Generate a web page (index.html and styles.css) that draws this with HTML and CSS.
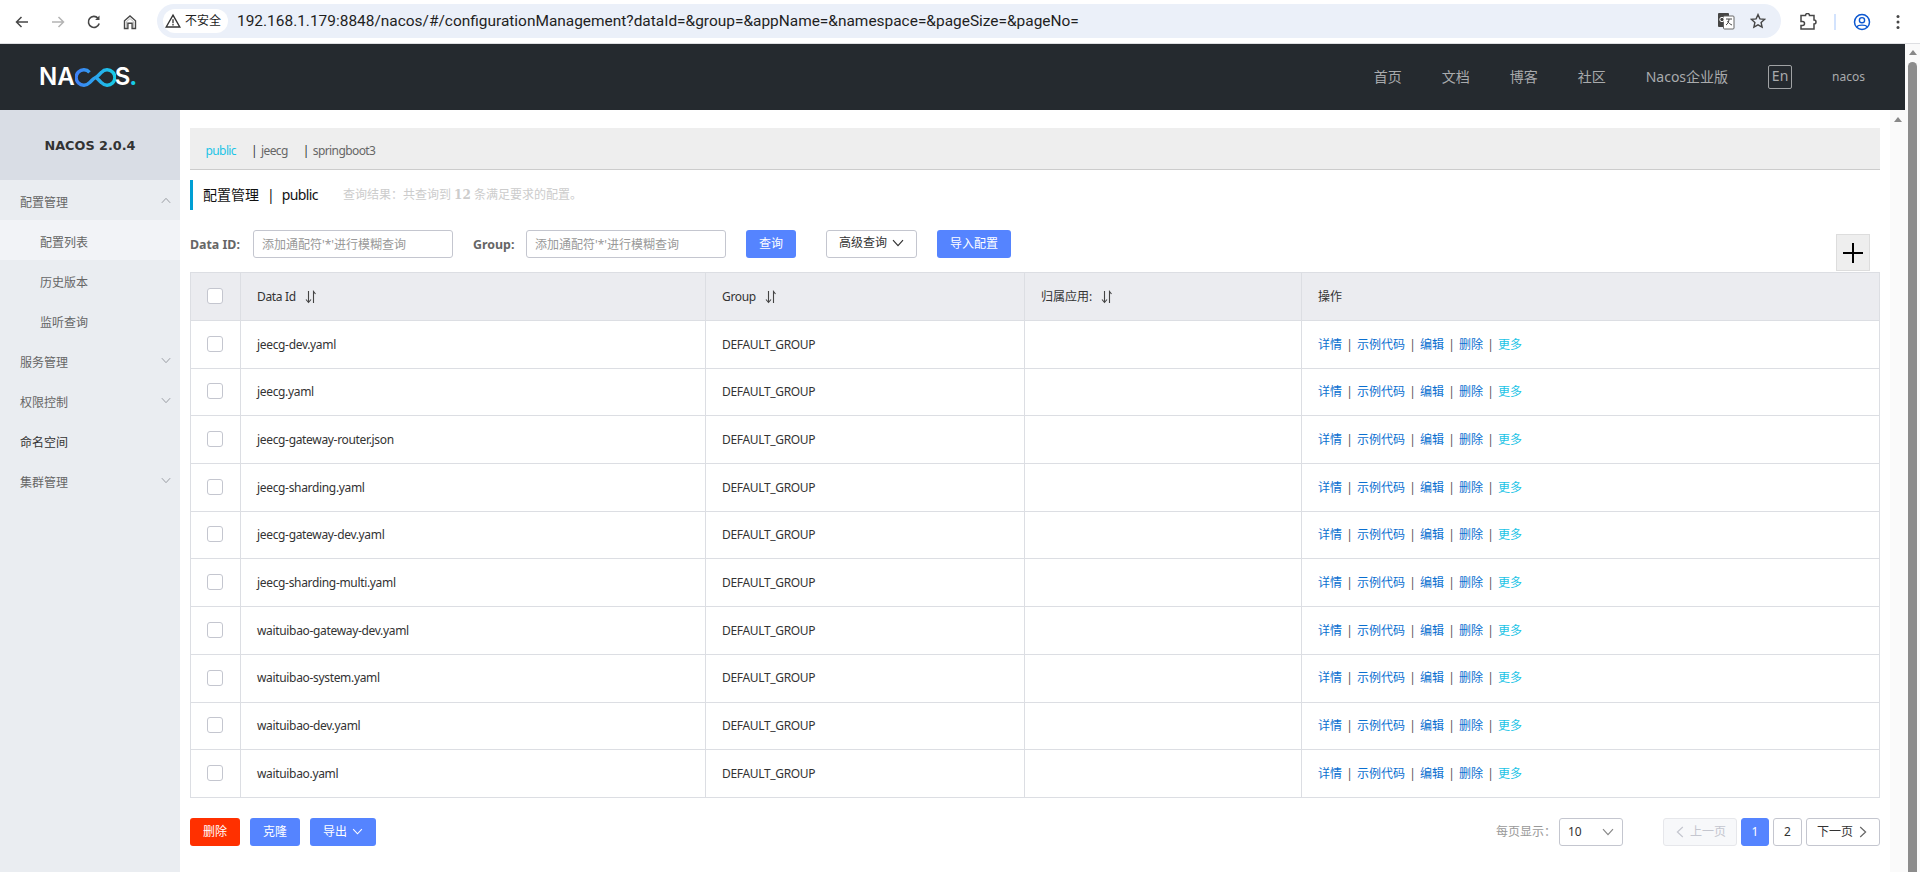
FILE: index.html
```html
<!DOCTYPE html>
<html lang="zh-CN">
<head>
<meta charset="utf-8">
<title>Nacos</title>
<link rel="stylesheet" href="styles.css">
</head>
<body>
<svg class="defs" width="0" height="0" aria-hidden="true">
  <defs>
    <linearGradient id="inf" x1="0" x2="1" y1="0" y2="0"><stop offset="0" stop-color="#3f7ff5"/><stop offset="1" stop-color="#17cbe6"/></linearGradient>
    <symbol id="sort" viewBox="0 0 12 14"><path d="M3.5 1v11M1 9.5 3.5 12.5 6 9.5M8.5 13V1.5L10.5 4" fill="none" stroke="#444" stroke-width="1.1"/></symbol>
    <symbol id="chev" viewBox="0 0 12 8"><path d="M1 1.2 6 6.6l5-5.4" fill="none" stroke="currentColor" stroke-width="1.2"/></symbol>
  </defs>
</svg>
<div class="chrome">
  <div class="tbtn"><svg width="16" height="16" viewBox="0 0 16 16"><path d="M14 8H3M7.5 3 2.5 8l5 5" fill="none" stroke="#474747" stroke-width="1.5"/></svg></div>
  <div class="tbtn"><svg width="16" height="16" viewBox="0 0 16 16"><path d="M2 8h11M8.5 3l5 5-5 5" fill="none" stroke="#b4b4b4" stroke-width="1.5"/></svg></div>
  <div class="tbtn"><svg width="16" height="16" viewBox="0 0 16 16"><path d="M13.2 9.5A5.5 5.5 0 1 1 12 4.2" fill="none" stroke="#474747" stroke-width="1.6"/><path d="M13.5 1.5v4.4H9.1z" fill="#474747"/></svg></div>
  <div class="tbtn"><svg width="16" height="16" viewBox="0 0 16 16"><path d="M2.5 14.5V6.7L8 2l5.5 4.7v7.8h-3.4V9.2H5.9v5.3z" fill="none" stroke="#474747" stroke-width="1.4"/><path d="M4.6 14V7.6L8 4.6l3.4 3v6.4" fill="none" stroke="#9a9a9a" stroke-width=".7"/></svg></div>
  <div class="addr">
    <div class="chip">
      <svg width="16" height="16" viewBox="0 0 16 16"><path d="M8 2.2 14.8 14H1.2z" fill="none" stroke="#333" stroke-width="1.4"/><path d="M8 6.2v4M8 11v1.6" stroke="#333" stroke-width="1.3"/></svg>
      <span>不安全</span>
    </div>
    <span class="url">192.168.1.179:8848/nacos/#/configurationManagement?dataId=&amp;group=&amp;appName=&amp;namespace=&amp;pageSize=&amp;pageNo=</span>
    <div class="addr-icons">
      <div class="aicon"><svg width="18" height="18" viewBox="0 0 18 18"><rect x="1" y="1" width="11" height="14" rx="1" fill="#454545"/><rect x="6.5" y="4" width="10.5" height="13" rx="1" fill="#fff" stroke="#666"/><circle cx="5" cy="7.5" r="2.2" fill="none" stroke="#fff" stroke-width="1"/><path d="M9 7h6M12 7c0 3-1.5 5-3 6M10.5 9c1 2 3 3.5 4.5 4" fill="none" stroke="#454545" stroke-width="1"/></svg></div>
      <div class="aicon"><svg width="16" height="16" viewBox="0 0 16 16"><path d="M8 1.6l1.9 4.3 4.6.5-3.4 3.1 1 4.6L8 11.8l-4.1 2.3 1-4.6L1.500 6.400l4.600-.5z" fill="none" stroke="#474747" stroke-width="1.4"/></svg></div>
    </div>
  </div>
  <div class="tbtn ext"><svg width="18" height="18" viewBox="0 0 18 18"><path d="M2 2.500h4.500a2 2 0 0 1 4 0H15v4.500a2 2 0 0 1 0 4V16H2v-3.500h1.500a2 2 0 0 0 0-4H2z" fill="none" stroke="#474747" stroke-width="1.5"/></svg></div>
  <div class="tdiv"></div>
  <div class="tbtn prof"><svg width="18" height="18" viewBox="0 0 18 18"><circle cx="9" cy="9" r="7.500" fill="none" stroke="#0b57d0" stroke-width="1.500"/><circle cx="9" cy="7.200" r="2.600" fill="none" stroke="#0b57d0" stroke-width="1.400"/><path d="M4 14c1-2.500 9-2.500 10 0" fill="none" stroke="#0b57d0" stroke-width="1.400"/></svg></div>
  <div class="tbtn"><svg width="16" height="16" viewBox="0 0 16 16"><circle cx="8" cy="2.500" r="1.500" fill="#474747"/><circle cx="8" cy="8" r="1.500" fill="#474747"/><circle cx="8" cy="13.500" r="1.500" fill="#474747"/></svg></div>
</div>
<div class="viewport">
  <div class="app">
    <header class="head">
      <div class="logo"><span>NA</span><svg class="logo-inf" width="41" height="19" viewBox="0 0 41 19"><path d="M14.500 4.300A7.700 7.700 0 1 0 14.500 14.700C17 12.500 18 10.500 20.500 9.500S24 6.500 26.500 4.300A7.700 7.700 0 1 1 26.500 14.700C24 12.500 23 10.500 20.500 9.500" fill="none" stroke="url(#inf)" stroke-width="3.400"/></svg><span>S</span><span class="logo-dot">.</span></div>
      <nav class="nav">
        <a>首页</a><a>文档</a><a>博客</a><a>社区</a><a>Nacos企业版</a><span class="lang">En</span><span class="user">nacos</span>
      </nav>
    </header>
    <div class="below">
      <aside class="side">
        <div class="side-head">NACOS 2.0.4</div>
        <div class="mi"><span>配置管理</span><svg class="up" width="10" height="7"><use href="#chev"/></svg></div>
        <div class="mi sub on"><span>配置列表</span></div>
        <div class="mi sub"><span>历史版本</span></div>
        <div class="mi sub"><span>监听查询</span></div>
        <div class="mi"><span>服务管理</span><svg width="10" height="7"><use href="#chev"/></svg></div>
        <div class="mi"><span>权限控制</span><svg width="10" height="7"><use href="#chev"/></svg></div>
        <div class="mi dark"><span>命名空间</span></div>
        <div class="mi"><span>集群管理</span><svg width="10" height="7"><use href="#chev"/></svg></div>
      </aside>
      <main class="main">
        <div class="ns">
          <a class="ns-on">public</a><i>|</i><a>jeecg</a><i>|</i><a>springboot3</a>
        </div>
        <div class="title">
          <span class="title-main">配置管理</span><span class="title-sep">|</span><span class="title-main title-lat">public</span>
          <span class="hint">查询结果：共查询到 <b>12</b> 条满足要求的配置。</span>
        </div>
        <div class="filter">
          <label class="lab lab-id">Data ID:</label>
          <input class="inp" placeholder="添加通配符'*'进行模糊查询">
          <label class="lab lab-group">Group:</label>
          <input class="inp" placeholder="添加通配符'*'进行模糊查询">
          <button class="btn pri btn-q">查询</button>
          <button class="btn def btn-adv">高级查询<svg width="12" height="8"><use href="#chev"/></svg></button>
          <button class="btn pri btn-imp">导入配置</button>
        </div>
        <div class="plus"><svg width="20" height="20" viewBox="0 0 20 20"><path d="M10 0v20M0 10h20" stroke="#000" stroke-width="2"/></svg></div>
        <table class="tb">
          <colgroup><col class="c1"><col class="c2"><col class="c3"><col class="c4"><col></colgroup>
          <thead>
            <tr>
              <th><span class="cb"></span></th>
              <th><span class="th-in">Data Id<svg width="12" height="14"><use href="#sort"/></svg></span></th>
              <th><span class="th-in">Group<svg width="12" height="14"><use href="#sort"/></svg></span></th>
              <th><span class="th-in th-cn">归属应用:<svg width="12" height="14"><use href="#sort"/></svg></span></th>
              <th>操作</th>
            </tr>
          </thead>
          <tbody>
            <tr><td><span class="cb"></span></td><td>jeecg-dev.yaml</td><td>DEFAULT_GROUP</td><td></td><td class="ops"><a>详情</a><i>|</i><a>示例代码</a><i>|</i><a>编辑</a><i>|</i><a>删除</a><i>|</i><a class="more">更多</a></td></tr>
            <tr><td><span class="cb"></span></td><td>jeecg.yaml</td><td>DEFAULT_GROUP</td><td></td><td class="ops"><a>详情</a><i>|</i><a>示例代码</a><i>|</i><a>编辑</a><i>|</i><a>删除</a><i>|</i><a class="more">更多</a></td></tr>
            <tr><td><span class="cb"></span></td><td>jeecg-gateway-router.json</td><td>DEFAULT_GROUP</td><td></td><td class="ops"><a>详情</a><i>|</i><a>示例代码</a><i>|</i><a>编辑</a><i>|</i><a>删除</a><i>|</i><a class="more">更多</a></td></tr>
            <tr><td><span class="cb"></span></td><td>jeecg-sharding.yaml</td><td>DEFAULT_GROUP</td><td></td><td class="ops"><a>详情</a><i>|</i><a>示例代码</a><i>|</i><a>编辑</a><i>|</i><a>删除</a><i>|</i><a class="more">更多</a></td></tr>
            <tr><td><span class="cb"></span></td><td>jeecg-gateway-dev.yaml</td><td>DEFAULT_GROUP</td><td></td><td class="ops"><a>详情</a><i>|</i><a>示例代码</a><i>|</i><a>编辑</a><i>|</i><a>删除</a><i>|</i><a class="more">更多</a></td></tr>
            <tr><td><span class="cb"></span></td><td>jeecg-sharding-multi.yaml</td><td>DEFAULT_GROUP</td><td></td><td class="ops"><a>详情</a><i>|</i><a>示例代码</a><i>|</i><a>编辑</a><i>|</i><a>删除</a><i>|</i><a class="more">更多</a></td></tr>
            <tr><td><span class="cb"></span></td><td>waituibao-gateway-dev.yaml</td><td>DEFAULT_GROUP</td><td></td><td class="ops"><a>详情</a><i>|</i><a>示例代码</a><i>|</i><a>编辑</a><i>|</i><a>删除</a><i>|</i><a class="more">更多</a></td></tr>
            <tr><td><span class="cb"></span></td><td>waituibao-system.yaml</td><td>DEFAULT_GROUP</td><td></td><td class="ops"><a>详情</a><i>|</i><a>示例代码</a><i>|</i><a>编辑</a><i>|</i><a>删除</a><i>|</i><a class="more">更多</a></td></tr>
            <tr><td><span class="cb"></span></td><td>waituibao-dev.yaml</td><td>DEFAULT_GROUP</td><td></td><td class="ops"><a>详情</a><i>|</i><a>示例代码</a><i>|</i><a>编辑</a><i>|</i><a>删除</a><i>|</i><a class="more">更多</a></td></tr>
            <tr><td><span class="cb"></span></td><td>waituibao.yaml</td><td>DEFAULT_GROUP</td><td></td><td class="ops"><a>详情</a><i>|</i><a>示例代码</a><i>|</i><a>编辑</a><i>|</i><a>删除</a><i>|</i><a class="more">更多</a></td></tr>
          </tbody>
        </table>
        <div class="foot">
          <div class="foot-l">
            <button class="btn danger btn-50">删除</button>
            <button class="btn pri btn-50">克隆</button>
            <button class="btn pri btn-exp">导出<svg width="11" height="7"><use href="#chev"/></svg></button>
          </div>
          <div class="foot-r">
            <span class="per">每页显示：</span>
            <div class="sel"><span>10</span><svg width="12" height="8"><use href="#chev"/></svg></div>
            <div class="pager">
              <button class="pg dis"><svg class="lt" width="12" height="8"><use href="#chev"/></svg>上一页</button>
              <button class="pg num cur">1</button>
              <button class="pg num">2</button>
              <button class="pg">下一页<svg class="rt" width="12" height="8"><use href="#chev"/></svg></button>
            </div>
          </div>
        </div>
      </main>
      <div class="scroll-inner"><span class="tri"></span></div>
    </div>
  </div>
  <div class="scroll-outer"><span class="tri"></span><div class="thumb"></div></div>
</div>
</body>
</html>
```
FILE: styles.css
```css
* { box-sizing: border-box; }
html, body { margin: 0; height: 100%; overflow: hidden; }
body {
  display: flex;
  flex-direction: column;
  height: 872px;
  font: 12px/1.3 "Noto Sans", "Noto Sans CJK SC", sans-serif;
  color: #333;
  background: #fff;
}
.defs { position: absolute; }
a { cursor: pointer; }
i { font-style: normal; }

/* browser toolbar */
.chrome {
  display: flex;
  align-items: center;
  height: 44px;
  flex: none;
  padding-left: 4px;
  border-bottom: 1px solid #dedfe2;
}
.tbtn { width: 36px; height: 36px; display: flex; align-items: center; justify-content: center; flex: none; }
.addr {
  width: 1624px;
  height: 34px;
  margin: 0 0 1px 9px;
  border-radius: 17px;
  background: #ebf0f9;
  display: flex;
  align-items: center;
  padding: 0 9px 0 6px;
}
.chip {
  width: 65px;
  height: 24px;
  border-radius: 12px;
  background: #fff;
  display: flex;
  align-items: center;
  gap: 4px;
  padding-left: 2px;
  color: #222;
}
.url { margin-left: 9px; font: 15.45px "Roboto", sans-serif; color: #1f1f1f; white-space: nowrap; }
.addr-icons { margin-left: auto; display: flex; gap: 4px; }
.aicon { width: 28px; height: 28px; display: flex; align-items: center; justify-content: center; }
.ext { margin-left: 9px; }
.tdiv { width: 2px; height: 16px; margin-left: 8px; background: #d3e3fd; }
.prof { margin-left: 8px; }

/* page frame */
.viewport { display: flex; flex: 1; min-height: 0; }
.app { flex: 1; min-width: 0; display: flex; flex-direction: column; }
.head {
  height: 66px;
  flex: none;
  background: #252a2f;
  display: flex;
  align-items: center;
  justify-content: space-between;
  padding: 0 40px 0 39px;
}
.logo {
  display: flex;
  align-items: center;
  color: #fff;
  font: 600 24px/1 "Inter", sans-serif;
}
.logo-inf { margin: 0 -1px 0 0; }
.logo-dot { color: #17cbe6; font-weight: 700; margin-left: -1px; }
.nav { display: flex; align-items: center; gap: 40px; color: #a9abad; font-size: 14px; }
.lang {
  width: 24px;
  height: 24px;
  border: 1px solid #a0a2a4;
  border-radius: 2px;
  display: flex;
  align-items: center;
  justify-content: center;
  margin-top: -1px;
}
.user { font-size: 12px; }
.below { flex: 1; display: flex; min-height: 0; }

/* sidebar */
.side { width: 180px; flex: none; background: #eaedf1; color: #666; }
.side-head {
  height: 70px;
  background: #d9dde5;
  display: flex;
  align-items: center;
  justify-content: center;
  font: 700 12.800px "DejaVu Sans", sans-serif;
  color: #333;
}
.mi {
  height: 40px;
  display: flex;
  align-items: center;
  justify-content: space-between;
  padding: 5px 9px 0 20px;
}
.mi svg { color: #9a9da3; margin-top: -5px; }
.mi svg.up { transform: rotate(180deg); }
.sub { padding-left: 40px; }
.on { background: #f2f3f7; }
.dark { color: #333; }

/* main */
.main { flex: 1; min-width: 0; padding: 18px 10px 0; position: relative; }
.ns {
  height: 42px;
  background: #eee;
  border-bottom: 1px solid #ccc;
  padding: 14px 0 0 15.500px;
  color: #666;
  display: flex;
  line-height: 18px;
  letter-spacing: -.6px;
}
.ns a { margin-right: 15px; }
.ns i { margin-right: 8px; color: #333; width: 2px; letter-spacing: 0; }
.ns-on { color: #1cc4e6; }
.title {
  height: 30px;
  margin-top: 10px;
  border-left: 3px solid #009fd4;
  padding-left: 10px;
  display: flex;
  align-items: center;
}
.title-main { font-size: 14px; color: #111; }
.title-lat { letter-spacing: -.6px; }
.title-sep { font-size: 14px; margin: 0 7px 0 8px; color: #111; }
.hint { margin-left: 25px; color: #ccc; }
.hint b { font-family: "DejaVu Serif", serif; }
.filter { height: 28px; margin-top: 20px; display: flex; align-items: center; }
.lab { font: 700 12.400px "Noto Sans", sans-serif; color: #666; }
.lab-id { width: 63px; }
.lab-group { width: 53px; margin-left: 20px; }
.inp {
  width: 200px;
  height: 28px;
  border: 1px solid #c4c6cf;
  border-radius: 3px;
  padding: 0 8px;
  font: inherit;
  outline: none;
}
.inp::placeholder { color: #999; opacity: 1; }
.btn {
  height: 28px;
  border-radius: 3px;
  border: 1px solid transparent;
  font: inherit;
  padding: 0;
  display: inline-flex;
  align-items: center;
  justify-content: center;
}
.pri { background: #5584ff; color: #fff; }
.danger { background: #ff3000; color: #fff; }
.def { background: #fff; border-color: #c4c6cf; color: #333; }
.btn-q { width: 50px; margin-left: 20px; }
.btn-adv { width: 91px; margin-left: 30px; gap: 5px; padding-bottom: 2px; }
.btn-imp { width: 74px; margin-left: 20px; }
.btn-50 { width: 50px; }
.btn-exp { width: 66px; gap: 5px; }
.plus {
  position: absolute;
  top: 124px;
  left: 1656px;
  width: 34px;
  height: 37px;
  background: #eee;
  border: 1px solid #ddd;
  display: flex;
  align-items: center;
  justify-content: center;
}

/* table */
.tb {
  width: 1690px;
  margin-top: 14px;
  border-collapse: collapse;
  table-layout: fixed;
}
.c1 { width: 50px; }
.c2 { width: 465px; }
.c3 { width: 319px; }
.c4 { width: 277px; }
.tb th, .tb td {
  border: 1px solid #dcdee3;
  padding: 0 16px;
  font-weight: 400;
  text-align: left;
  vertical-align: middle;
  letter-spacing: -.33px;
}
.tb th { height: 48px; background: #ebecf0; }
.tb td { height: 47.700px; }
.tb th:first-child, .tb td:first-child { padding: 0 2px 2px 0; text-align: center; }
.cb {
  display: inline-block;
  width: 16px;
  height: 16px;
  border: 1px solid #c4c6cf;
  border-radius: 3px;
  background: #fff;
  vertical-align: middle;
}
.th-in { display: inline-flex; align-items: center; gap: 9px; }
.tb .th-cn { letter-spacing: 0; }
.tb th:last-child, .tb td.ops { letter-spacing: 0; }
.ops i { display: inline-block; width: 15px; text-align: center; color: #555; }
.ops a { color: #0a6fd0; }
.ops a.more { color: #1cc4e6; }

/* footer */
.foot { margin-top: 20px; display: flex; justify-content: space-between; align-items: center; }
.foot-l { display: flex; gap: 10px; }
.foot-r { display: flex; align-items: center; }
.per { color: #999; margin-right: 3px; }
.sel {
  width: 64px;
  height: 28px;
  border: 1px solid #c4c6cf;
  border-radius: 3px;
  display: flex;
  align-items: center;
  justify-content: space-between;
  padding: 0 8px;
}
.sel svg { color: #888; }
.pager { display: flex; gap: 4px; margin-left: 40px; }
.pg {
  width: 74px;
  height: 28px;
  background: #fff;
  border: 1px solid #c4c6cf;
  border-radius: 3px;
  font: inherit;
  color: #333;
  padding: 0;
  display: flex;
  align-items: center;
  justify-content: center;
  gap: 4px;
}
.pg svg { color: #666; }
.lt { transform: rotate(90deg); }
.rt { transform: rotate(-90deg); }
.num { width: 29px; }
.cur { width: 28px; background: #5584ff; border-color: #5584ff; color: #fff; }
.dis { background: #f7f8fa; border-color: #e6e7eb; color: #c4c6cf; }
.dis svg { color: #c4c6cf; }

/* scrollbars */
.scroll-inner { width: 15px; flex: none; background: #fafafa; display: flex; justify-content: center; padding-top: 7px; }
.scroll-outer { width: 15px; flex: none; background: #fafafa; display: flex; flex-direction: column; align-items: center; padding-top: 6px; }
.tri { display: block; width: 0; height: 0; border: 4.500px solid transparent; border-top: 0; border-bottom: 5px solid #888; }
.thumb { width: 9px; flex: 1; margin-top: 7px; background: #8c8c8c; border-radius: 4.500px 4.500px 0 0; }
```
